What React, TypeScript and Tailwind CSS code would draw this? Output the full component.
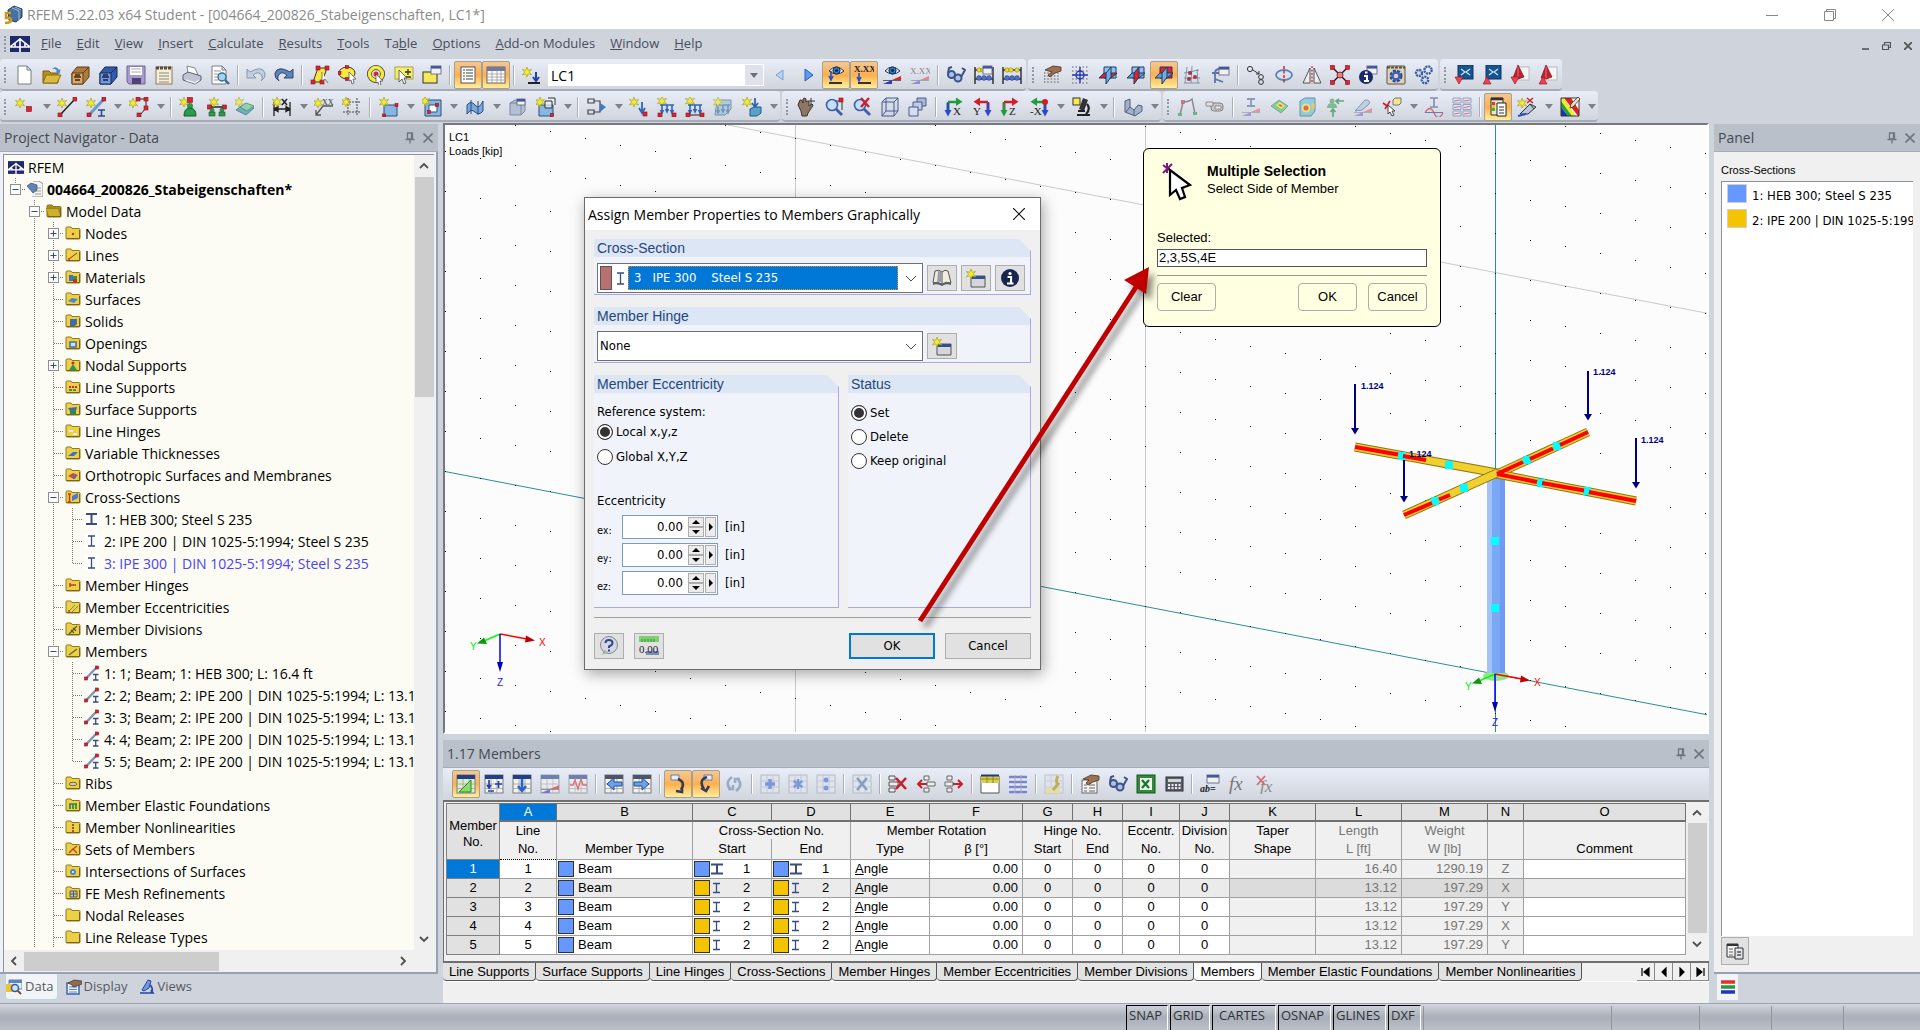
import React, { useState } from 'react';

const Star = ({ x = 5, y = 5 }: { x?: number; y?: number }) => (
    <g transform={`translate(${x} ${y})`}>
        <path d="M0-5L1.3-1.6L4.6-2.6L2.3 0L4.6 3L1.2 1.8L0 5L-1.3 1.8L-4.6 3L-2.4 0L-4.6-2.6L-1.3-1.6Z" fill="#f4ec2e" stroke="#a8a42a" strokeWidth=".7" />
    </g>
);

const Node = ({ x, y, s = 4 }: { x: number; y: number; s?: number }) => (
    <rect x={x - s / 2} y={y - s / 2} width={s} height={s} fill="#dc2430" stroke="#8d1220" strokeWidth=".6" />
);

const Grid = ({ x = 1, y = 1, w = 18, h = 18, head = '#203f86', fill = '#f2f2ea' }: { x?: number; y?: number; w?: number; h?: number; head?: string; fill?: string }) => (
    <g>
        <rect x={x} y={y} width={w} height={h} fill={fill} stroke="#777d88" />
        <path d={`M${x} ${y + h / 2}h${w}M${x} ${y + h * 0.75}h${w}M${x + w / 3} ${y}v${h}M${x + (w * 2) / 3} ${y}v${h}`} stroke="#9ca0a8" strokeWidth=".8" />
        <rect x={x} y={y} width={w} height="4" fill={head} />
    </g>
);

const Win = ({ x, y, w = 9, h = 8 }: { x: number; y: number; w?: number; h?: number }) => (
    <g>
        <rect x={x} y={y} width={w} height={h} fill="#f1f1f4" stroke="#666b80" strokeWidth=".9" />
        <rect x={x} y={y} width={w} height="2.6" fill="#46589c" />
    </g>
);

const Loads = ({ c = '#2f66b8' }: { c?: string }) => (
    <g fill="none" stroke={c} strokeWidth="1.6">
        <path d="M3 8h14M5 8v7M10 8v6M15 8v7M3.5 13L5 16L6.5 13M8.5 12L10 15L11.5 12M13.5 13L15 16L16.5 13" />
    </g>
);

const Planes = ({ hot }: { hot: number }) => (
    <g strokeWidth="1" stroke="#1d3b63">
        <path d="M6 2h12v11H6z" fill={hot === 2 ? '#e0202c' : '#8ec3ee'} />
        <path d="M1 13l5-5h13l-6 5z" fill={hot === 0 ? '#e0202c' : '#5f9fd8'} />
        <path d="M8 8l5-6v10l-5 7z" fill={hot === 1 ? '#e0202c' : '#6fb0e4'} />
    </g>
);

const Eye = ({ y = 7 }: { y?: number }) => (
    <g>
        <path d={`M3 ${y}q7-8 15 0q-7 6-15 0z`} fill="#e8f2fb" stroke="#24364f" />
        <circle cx="10.5" cy={y - 0.5} r="3.6" fill="#2f78c4" stroke="#12325c" />
        <circle cx="10.5" cy={y - 0.5} r="1.3" fill="#0a1428" />
    </g>
);

const Wedge = ({ faded }: { faded?: boolean }) => (
    <g opacity={faded ? 0.45 : 1}>
        <path d="M1 19L10 15V19Z" fill="#2c39c9" />
        <path d="M10 15L19 11V15Z" fill="#d9242c" />
        <path d="M1 15.5H19" stroke="#444" strokeWidth=".8" />
    </g>
);

const Axes = ({ a, b, flip, label, dot }: { a: string; b: string; flip?: boolean; label: string; dot?: boolean }) => (
    <g>
        <g transform={flip ? 'translate(20 0) scale(-1 1)' : ''}>
            <path d="M4 5H13M4 5V14" stroke={a} strokeWidth="2.6" />
            <path d="M4 6V14" stroke={b} strokeWidth="2.6" />
            <path d="M12 .5L18.5 4.7L12 9Z" fill={a} />
            <path d="M.5 13H7.5L4 19.5Z" fill={b} />
            {dot && <circle cx="4" cy="5" r="3" fill="#cf1f2a" />}
        </g>
        <text x={flip ? 1 : 9} y="18" fontSize="11" fontFamily="Liberation Serif, serif" fill="#222">{label}</text>
    </g>
);

const Cad = ({ up, red }: { up?: boolean; red?: boolean }) => (
    <g>
        {red ? (
            <g>
                <rect x="9" y="2" width="10" height="13" fill="#f5f5f5" stroke="#b9b9bd" />
                <path d="M8 0L14 12L8 14L3 13Z" fill="#c01f2c" stroke="#7b1019" strokeWidth=".7" />
                <path d="M8 2V13" stroke="#e6727a" />
            </g>
        ) : (
            <g>
                <rect x="4" y="0" width="15" height="14" fill="#17548f" stroke="#0d3766" />
                <path d="M7 4l4 3-4 3M16 4l-4 3 4 3" fill="none" stroke="#c9e2f7" strokeWidth="1.3" />
            </g>
        )}
        <path d={up ? 'M1 19L5 12L9 19Z' : 'M1 12H9L5 19Z'} fill="#ea4450" stroke="#a41a24" strokeWidth=".7" />
    </g>
);

const CellGrid = ({ children }: { children?: React.ReactNode }) => (
    <g>
        <rect x="1" y="1" width="18" height="18" fill="#dfe3eb" stroke="#b4bac6" />
        <path d="M1 7h18M1 13h18M7 1v18M13 1v18" stroke="#c2c8d3" />
        {children}
    </g>
);

const Glasses = () => (
    <g fill="#a9c3e6" stroke="#3f5288" strokeWidth="2">
        <circle cx="5.500" cy="9.500" r="3.500" />
        <circle cx="12" cy="13" r="3.500" />
        <path d="M2 8L3 3l3-1M15 12l4-7-3-2" fill="none" />
    </g>
);

const Abacus = ({ win }: { win?: boolean }) => (
    <g>
        <path d="M1 2V19M19 2V19M1 5H19M1 14H19" stroke="#333" strokeWidth="1.5" />
        <g fill="#f0d92a" stroke="#7d7113" strokeWidth=".5"><circle cx="5" cy="5" r="2.2" /><circle cx="9" cy="5" r="2.2" /><circle cx="15" cy="5" r="2.2" /></g>
        <g fill="#4c6fd0" stroke="#22387d" strokeWidth=".5"><circle cx="5" cy="13" r="2.4" /><circle cx="10" cy="13" r="2.4" /><circle cx="15" cy="13" r="2.4" /></g>
        {win && <Win x={9} y={1} />}
    </g>
);

const Supports = () => (
    <g fill="#2b9a4a" stroke="#155c2a" strokeWidth=".6"><circle cx="5" cy="13" r="2" /><rect x="2" y="15" width="6" height="4" /><circle cx="15" cy="13" r="2" /><rect x="12" y="15" width="6" height="4" /></g>
);

const icons: Record<string, React.ReactNode> = {
    // file toolbar
    new: <path d="M4 1h9l4 4v14H4zM13 1v4h4" fill="#fff" stroke="#777c85" />,
    open: <g><path d="M1 6h6l2 2h7v10H1z" fill="#b78f1e" stroke="#7a5e10" /><path d="M4 10h15l-4 8H1z" fill="#d9bb40" stroke="#8a6c12" /><path d="M10 4q4-4 7 1l1.5-1-1 5-4-2 1.5-1q-2-3-5-2" fill="#4a86c9" /></g>,
    box: <g><path d="M2 8l5-6h12v10l-6 7H2z" fill="#b07a3a" stroke="#5a3c18" /><path d="M2 8h11v11H2zM13 8l6-6" fill="#d8a666" stroke="#5a3c18" /><path d="M4 12h7M5 10h5M5 15h5" stroke="#3d2811" strokeWidth="1.4" /></g>,
    boxBlue: <g><path d="M2 8l5-6h12v10l-6 7H2z" fill="#345ba8" stroke="#16295c" /><path d="M2 8h11v11H2zM13 8l6-6" fill="#7398de" stroke="#16295c" /><path d="M4 12h7M5 10h5M5 15h5" stroke="#13234e" strokeWidth="1.4" /></g>,
    save: <g><path d="M1 1h18v18H3l-2-2z" fill="#a79cc9" stroke="#6f6596" /><rect x="4" y="2" width="12" height="8" fill="#fff" /><path d="M5 4h10M5 7h10" stroke="#aaa" /><rect x="6" y="13" width="9" height="6" fill="#4d4378" /></g>,
    report: <g><rect x="2" y="2" width="16" height="17" fill="#f5eedb" stroke="#8a7a5c" /><path d="M2 3h16" stroke="#5b4a38" strokeWidth="3" strokeDasharray="3 1" /><path d="M5 8h10M5 11h10M5 14h10M5 17h10" stroke="#8d8878" /></g>,
    print: <g><path d="M5 1l8 2 3 7-10-1z" fill="#fff" stroke="#888" /><path d="M1 10l5-3 13 4v4l-6 4-12-4z" fill="#bfc3d2" stroke="#5c607a" /><path d="M4 15l9 3 4-3" stroke="#f0f0f0" strokeWidth="1.5" fill="none" /></g>,
    preview: <g><path d="M2 1h10l4 4v14H2zM12 1v4h4" fill="#fff" stroke="#777c85" /><path d="M4 6h7M4 9h6M4 12h4M4 15h4" stroke="#999" /><circle cx="12" cy="12" r="4" fill="#a7d2ee" stroke="#386b9c" strokeWidth="1.4" /><path d="M15 15l4 4" stroke="#386b9c" strokeWidth="2.4" /></g>,
    undo: <path d="M1 4v9h9L7 10q6-5 9 1q1 3-1 5 5-3 4-8Q16 0 4 7z" fill="#c3cddb" stroke="#8797b0" />,
    redo: <path d="M19 4v9h-9l3-3q-6-5-9 1q-1 3 1 5-5-3-4-8Q4 0 16 7z" fill="#5f83b5" stroke="#2c4670" />,
    selPoly: <g><path d="M8 3H17L12 17H3Z" fill="#f6e93c" stroke="#333" /><Node x={8} y={3} /><Node x={17} y={3} /><Node x={3} y={17} /><Node x={12} y={17} /><path d="M12 7v9l3-2 3 4" fill="#fff" stroke="#555" strokeWidth=".8" /></g>,
    selEllipse: <g><ellipse cx="9" cy="8" rx="8" ry="6" fill="#f6e93c" stroke="#333" /><Node x={9} y={2} s={3} /><Node x={1.5} y={8} s={3} /><Node x={9} y={14} s={3} /><path d="M11 7l7 7-3 0 1 4-2 1-1-4-2 1z" fill="#fff" stroke="#555" strokeWidth=".8" /></g>,
    selRing: <g><circle cx="10" cy="9" r="6.5" fill="none" stroke="#333" strokeWidth="5" /><circle cx="10" cy="9" r="6.5" fill="none" stroke="#f6e93c" strokeWidth="3.5" /><circle cx="10" cy="9" r="2.5" fill="#d9242c" /><path d="M10 9l7 7-3 0 1 4-2 1-1-4-2 1z" fill="#fff" stroke="#555" strokeWidth=".8" /></g>,
    selPlus: <g><rect x="1" y="2" width="18" height="12" fill="#f5ef6a" stroke="#aaa250" /><path d="M14 4v6M11 7h6M11 12h6" stroke="#333" strokeWidth="1.3" /><path d="M5 5v12l3-3 2 5 2-1-2-5h3z" fill="#fff" stroke="#444" strokeWidth=".8" /></g>,
    selWin: <g><rect x="1" y="7" width="14" height="11" fill="#f5e95a" stroke="#333" /><Win x={9} y={1} w={10} /></g>,
    table1: <g><rect x="3" y="2" width="14" height="16" fill="#fff" stroke="#555" /><path d="M5 5h2M8 5h7M5 8h2M8 8h7M5 11h2M8 11h7M5 14h2M8 14h7" stroke="#444" strokeWidth="1.2" /></g>,
    table2: <g><rect x="1" y="2" width="18" height="16" fill="#fff" stroke="#666" /><rect x="1" y="2" width="18" height="4" fill="#6d7aa8" /><path d="M1 9h18M1 12h18M1 15h18M6 6v12M11 6v12M15 6v12" stroke="#999" strokeWidth=".8" /></g>,
    loadNew: <g><Star x={5} y={7} /><path d="M14 7v8M11 12l3 4 3-4" stroke="#1d3fb3" strokeWidth="2" fill="none" /><path d="M6 18h12" stroke="#222" strokeWidth="2" /></g>,
    prev: <path d="M13 5v10L6 10z" fill="#b9d0f2" stroke="#7d9fd4" />,
    next: <path d="M7 4v12l8-6z" fill="#5e9bf0" stroke="#2b5db8" />,
    showLoad: <g><Eye y={6} /><path d="M5 6v8M3 11l2 4 2-4" stroke="#2751c6" strokeWidth="1.6" fill="none" /><path d="M3 18h13" stroke="#333" strokeWidth="2" /></g>,
    showVal: <g><text x="0" y="7" fontSize="9" fontFamily="Liberation Serif, serif" fontWeight="bold" fill="#222">X.XX</text><path d="M5 8v7M3 12l2 4 2-4" stroke="#2751c6" strokeWidth="1.6" fill="none" /><path d="M4 18h13" stroke="#333" strokeWidth="2" /></g>,
    eyeRes: <g><Eye y={6} /><Wedge /></g>,
    valRes: <g><text x="0" y="9" fontSize="9" fontFamily="Liberation Serif, serif" fill="#888">X.XX</text><Wedge faded /></g>,
    glasses: <Glasses />,
    abacusWin: <Abacus win />,
    abacus: <Abacus />,
    gridHand: <g><path d="M2 11h16M2 14h16M2 17h16M2 8h16" stroke="#555" strokeDasharray="1.5 1.8" /><path d="M3 5l8-4 8 1v4l-6 2-5 4-2-2 4-3z" fill="#9c7050" stroke="#4a3222" strokeWidth=".8" /></g>,
    gridSnap: <g><path d="M2 2h16M2 6h16M2 14h16M2 18h16" stroke="#666" strokeDasharray="1.5 2" /><circle cx="10" cy="10" r="4" fill="none" stroke="#2537b4" strokeWidth="1.4" /><path d="M10 2v16M2 10h16" stroke="#2537b4" strokeWidth="1.4" /></g>,
    plane1: <Planes hot={0} />,
    plane2: <Planes hot={1} />,
    plane3: <Planes hot={2} />,
    gridLines: <g stroke="#6c93a6" strokeWidth=".9"><path d="M5 2L3 18M10 1L9 18M15 4L16 18M2 8l15-3M2 13h16M2 18h16" /><Node x={7} y={14} s={2.5} /><Node x={13} y={12} s={2.5} /><Node x={8} y={8} s={2.5} /></g>,
    coord: <g><path d="M5 18V8q0-4 5-4M2 8h8M5 14l8 3" fill="none" stroke="#5d74a8" strokeWidth="1.8" /><Win x={9} y={2} w={10} /></g>,
    moveCopy: <g fill="none" stroke="#333"><circle cx="4" cy="4" r="2.6" /><circle cx="15" cy="12" r="2.4" /><circle cx="15" cy="17" r="2.4" /><path d="M7 5l6 4M13 6v3h-3" /></g>,
    rotate: <g><ellipse cx="10" cy="10" rx="8" ry="5" fill="none" stroke="#5b84b8" strokeWidth="1.8" /><path d="M10 1v18" stroke="#cf1f2a" strokeDasharray="3 1.5" strokeWidth="1.4" /></g>,
    mirror: <g><path d="M8 3v15H1zM12 3v15h7z" fill="#eceef2" stroke="#555" /><path d="M10 1v18" stroke="#cf1f2a" strokeDasharray="2 1.5" strokeWidth="1.2" /></g>,
    explode: <g><path d="M2 2L18 18M18 2L2 18" stroke="#222" strokeWidth="1.5" /><Node x={2.5} y={2.5} /><Node x={17.5} y={2.5} /><Node x={2.5} y={17.5} /><Node x={17.5} y={17.5} /><circle cx="10" cy="10" r="3" fill="#e6808a" stroke="#92202c" /></g>,
    infoWin: <g><Win x={9} y={1} w={10} /><circle cx="8" cy="12" r="7" fill="#1b2a6b" /><path d="M6 11h3v5M6 16h5M7 7.500h2.500" stroke="#fff" strokeWidth="2" /></g>,
    gearWin: <g><rect x="1" y="1" width="18" height="18" rx="1" fill="#ded3bd" stroke="#5a5140" /><path d="M1 2.500h18" stroke="#5a5140" strokeWidth="2" strokeDasharray="3 1" /><circle cx="10" cy="11" r="4.500" fill="none" stroke="#2b4a92" strokeWidth="4" strokeDasharray="2.600 1" /><circle cx="10" cy="11" r="3.500" fill="none" stroke="#3e63b5" strokeWidth="2.500" /></g>,
    gears: <g fill="none" stroke="#3c5ba6" strokeWidth="2.400"><circle cx="5" cy="8" r="3" strokeDasharray="2 .8" /><circle cx="14" cy="5" r="3.600" strokeDasharray="2 .8" /><circle cx="11" cy="15" r="3.200" strokeDasharray="2 .8" /></g>,
    cadDown: <Cad />,
    cadUp: <Cad up />,
    cadRed: <Cad red />,
    cadRedUp: <Cad red up />,
    // model toolbar
    nNode: <g><Star x={5} y={6} /><Node x={14} y={12} s={5} /></g>,
    nLine: <g><path d="M3 18L18 2" stroke="#222" strokeWidth="1.5" /><Star x={5} y={6} /><Node x={18} y={2} s={4} /><Node x={3} y={18} s={4} /></g>,
    nMember: <g><path d="M3 18L18 2" stroke="#6a9ad0" strokeWidth="3" /><Star x={5} y={6} /><Node x={18} y={2} /><Node x={3} y={18} /><path d="M12 13h7M12 19h7M15.500 13v6" stroke="#324b87" strokeWidth="1.600" /></g>,
    nPoly: <g><path d="M8 2h9v9l-6 7" fill="none" stroke="#222" /><Star x={4} y={6} /><Node x={9} y={2} /><Node x={17} y={2} /><Node x={17} y={11} /><Node x={10} y={18} /></g>,
    nSupport: <g><Star x={5} y={5} /><Node x={11} y={3} s={5} /><circle cx="11" cy="9" r="3" fill="#2b9a4a" /><path d="M5 19q0-8 6-8t6 8z" fill="#2b9a4a" stroke="#155c2a" /></g>,
    nLineSup: <g><path d="M2 10h16" stroke="#222" strokeWidth="1.500" /><Star x={7} y={5} /><Node x={2.500} y={10} /><Node x={17.500} y={10} /><Supports /></g>,
    nSurfSup: <g opacity=".75"><path d="M1 13l8-6 10 4-8 7z" fill="#4b9fb0" stroke="#2a6d7c" /><path d="M5 10l6-4 8 3-7 5z" fill="#7bc9a0" stroke="#2e8458" /><Star x={4} y={5} /></g>,
    nDim: <g><path d="M2 5v14M18 5v14M2 12h16M2 12l4-2.500v5zM18 12l-4-2.500v5z" fill="#222" stroke="#222" strokeWidth="1.300" /><Star x={5} y={5} /><path d="M10 2l5 6M15 2l-5 6" stroke="#222" strokeWidth="1.500" /></g>,
    nText: <g><path d="M19 9H9L2 18M2 13v5h5" fill="none" stroke="#555" strokeWidth="1.300" /><Star x={4} y={6} /><text x="8" y="8" fontSize="8" fontFamily="Liberation Serif, serif" fill="#333">XX</text></g>,
    nGuides: <g><path d="M6 1v18M15 1v18M1 5h18M1 15h18" stroke="#444" strokeDasharray="2 1" /><Star x={4} y={5} /></g>,
    nSurface: <g><path d="M5 8h13v11H5z" fill="#88b5e2" stroke="#28527f" /><Star x={5} y={5} /><Node x={17.500} y={8} s={3} /><Node x={5} y={18.500} s={3} /></g>,
    nOpening: <g><path d="M3 3h16v16H3z" fill="#88b5e2" stroke="#28527f" /><path d="M7 8h8v7H7z" fill="#fff" stroke="#28527f" /><Star x={3} y={4} /><Node x={7} y={15} s={3} /><Node x={15} y={8} s={3} /></g>,
    nCurved: <g><path d="M2 8q4-5 8 0t8-4v10q-4 5-8 1t-8 2z" fill="#7ba9dc" stroke="#2d4f80" /><path d="M6 3v14M13 4v14" stroke="#2d4f80" /></g>,
    nSolid: <g><path d="M3 6l5-3h10v11l-4 4H3z" fill="#b4bfd2" stroke="#7c89a3" /><path d="M3 6h11v12M14 6l4-3" fill="none" stroke="#7c89a3" /><Win x={10} y={2} w={8} h={6} /></g>,
    nExtrude: <g><path d="M3 8h14v11H3z" fill="#88b5e2" stroke="#28527f" /><Star x={4} y={5} /><path d="M9 4h7v7H9zM12 1h7v7" fill="#eef" fillOpacity=".7" stroke="#333" /><Node x={16} y={18} s={3} /></g>,
    nRelease: <g><path d="M1 2h6v4H1zM1 13h6v4H1zM7 4h6v11H7" fill="none" stroke="#444" strokeWidth="1.200" /><path d="M13 6l6 4-6 5z" fill="#3c78c8" /></g>,
    nLoadNode: <g><Star x={5} y={5} /><path d="M13 5v9M10 11l3 5 3-5" fill="none" stroke="#2f66b8" strokeWidth="1.800" /><Node x={16} y={17} /></g>,
    nLoad1: <g><Star x={5} y={4} /><Loads /><Node x={3} y={18} /><Node x={17} y={18} /></g>,
    nLoad2: <g><Star x={5} y={4} /><Loads /><path d="M3 18h14" stroke="#222" /><Node x={3} y={18} /><Node x={17} y={18} /></g>,
    nLoad3: <g opacity=".7"><path d="M4 3h14v9l-6 6H2z" fill="#9bc3d8" stroke="#4a7892" /><Loads c="#4a78a8" /><Star x={5} y={5} /></g>,
    nLoad4: <g><Star x={5} y={5} /><path d="M13 1v8M10 6l3 4 3-4" fill="none" stroke="#2f66b8" strokeWidth="1.800" /><path d="M8 12l4-2h7v6l-4 3H8z" fill="#5aa0cc" stroke="#235a80" /></g>,
    hand: <g><path d="M4 3q2-1 3 3V2q2-2 3 0v3q2-2 3 0v4l3-2q2 1 0 3l-4 6-1 3H6L5 14 2 8z" fill="#8d7663" stroke="#3d3027" /><path d="M15 1v7M12 4h7" stroke="#333" /></g>,
    zoomWin: <g><path d="M8 4h10v9" fill="none" stroke="#333" /><circle cx="8" cy="8" r="5.500" fill="#c3defa" stroke="#3d61a8" strokeWidth="1.600" /><path d="M12 12l6 6" stroke="#3d61a8" strokeWidth="2.800" /><Node x={17} y={3} s={4} /></g>,
    zoomX: <g><circle cx="8" cy="8" r="5.500" fill="#c3defa" stroke="#3d61a8" strokeWidth="1.600" /><path d="M12 12l6 6" stroke="#3d61a8" strokeWidth="2.800" /><path d="M9 1l8 9M17 1l-8 9" stroke="#cf1f2a" strokeWidth="2.400" /></g>,
    cube: <path d="M2 5h12v14H2zM6 1h12v13H6zM2 5l4-4M14 5l4-4M14 19l4-5M2 19l4-5" fill="#c7d3ea" fillOpacity=".4" stroke="#4a5a86" />,
    cubes: <g fill="#a9b9d9" stroke="#4a5a86"><path d="M9 1h9v8H9z" /><path d="M5 5h9v8H5z" fill="#c0cce6" /><path d="M1 10h9v9H1z" fill="#d5def0" /></g>,
    axX: <Axes a="#1f9a3e" b="#2b49c4" label="X" />,
    axY: <Axes a="#cf1f2a" b="#2b49c4" flip label="Y" />,
    axZ: <Axes a="#cf1f2a" b="#1f9a3e" label="Z" />,
    axNX: <Axes a="#1f9a3e" b="#2b49c4" flip dot label="-X" />,
    crane: <g><path d="M11 1l5 2-4 11-5-2z" fill="#333" /><path d="M15 7q4 5-1 10M5 18h13M6 14h7" stroke="#222" strokeWidth="2.200" fill="none" /><rect x="1" y="1" width="7" height="7" fill="#f7ec4d" stroke="#333" /></g>,
    render: <g><path d="M2 4l5-2v8l4 3 4-5 4 1v5l-7 5-10-4z" fill="#9fb2c9" stroke="#4e617c" /><path d="M7 10l-4 5M11 13v5" stroke="#4e617c" /></g>,
    deform: <g opacity=".6"><path d="M3 18L6 5q6 0 9-3l3 15" fill="none" stroke="#555" strokeWidth="1.500" /><g fill="#2a9a4a"><rect x="1" y="16" width="4" height="3" /><rect x="16" y="15" width="4" height="3" /></g><Node x={6} y={5} s={3} /></g>,
    tool: <g><rect x="6" y="6" width="12" height="8" rx="3" fill="#c9c9cc" stroke="#7e7e84" /><path d="M1 5h7v4H1z" fill="#e3e3e6" stroke="#8a8a90" /><path d="M10 9h6v3h-6z" fill="#eee" stroke="#8a8a90" /></g>,
    secRes: <g opacity=".8"><path d="M6 2h8M6 9h8M10 2v7" stroke="#7a88b0" strokeWidth="1.800" /><Wedge faded /></g>,
    surfRes: <g opacity=".75"><path d="M2 9l8-6 9 6-7 7z" fill="#58d06a" stroke="#558" strokeWidth=".6" /><path d="M7 8l4-3 5 4-4 3z" fill="#f5e84a" /><path d="M9 8l2-1 3 2-2 1z" fill="#e64430" /></g>,
    solidRes: <g opacity=".8"><path d="M3 4l5-3h10v13l-4 5H3z" fill="#7fc6e0" stroke="#47809a" /><circle cx="9" cy="11" r="4.500" fill="#f0e24a" /><circle cx="9" cy="11" r="2.500" fill="#e04a38" /><ellipse cx="16" cy="9" rx="1.500" ry="3.500" fill="#f0c24a" /></g>,
    supRes: <g opacity=".7"><circle cx="7" cy="4" r="2.500" fill="#5aa86c" /><path d="M2 11q0-5 5-5t5 5z" fill="#5aa86c" /><path d="M12 4h7M14 2l-3 2 3 3M8 20v-7M5.500 15L8 12l2.500 3" stroke="#2f8f48" strokeWidth="1.600" fill="none" /></g>,
    cutRes: <g opacity=".8"><path d="M2 14L12 3q6 0 4 4l-7 6z" fill="#bccbe2" stroke="#6f83a6" /><Wedge faded /></g>,
    pick: <g><path d="M1 6l7 5M8 4l-5 8" stroke="#cf1f2a" strokeWidth="1.600" /><path d="M11 3l2-2h6v5l-2 2h-6z" fill="#f3e58a" stroke="#777" /><path d="M6 8v9l2-2 2 4 2-1-2-4h3z" fill="#fff" stroke="#444" /></g>,
    secWave: <g opacity=".8"><path d="M6 1h8M6 10h8M10 1v9" stroke="#6a79a6" strokeWidth="1.600" /><path d="M1 16q5-9 9 0t9 0" fill="none" stroke="#d9455a" strokeWidth="1.300" /><path d="M1 15.500h18" stroke="#4a63c0" /></g>,
    multi: <g opacity=".85"><path d="M1 1h8v5H1zM11 1h8v5h-8zM1 7.500h8v5H1zM11 7.500h8v5h-8zM1 14h8v5H1zM11 14h8v5h-8z" fill="#dfe5f4" stroke="#8a97c0" /><path d="M2 4l6-1M12 4l6-1M2 10.500l6-1M12 10.500l6-1M2 17l6-1M12 17l6-1" stroke="#d0606e" /></g>,
    panel: <g><path d="M3 1h12v17H3z" fill="#efe6c8" stroke="#333" /><path d="M3 2h12" stroke="#333" strokeWidth="2.500" /><path d="M4 5h3v3H4z" fill="#e33" /><path d="M4 8h3v3H4z" fill="#dc2" /><path d="M4 11h3v3H4z" fill="#3b3" /><path d="M9 6h9v13H9z" fill="#fff" stroke="#222" /><path d="M11 10h5M11 13h5M11 16h5" stroke="#333" /></g>,
    clip: <g><path d="M3 17L13 7l6 3-8 7z" fill="#b7c6dc" stroke="#333" /><path d="M13 7l4 5" stroke="#333" /><Star x={5} y={6} /><path d="M10 1l6 5M16 1l-6 5" stroke="#cf1f2a" strokeWidth="1.500" /><path d="M1 19l8-2" stroke="#2751c6" strokeWidth="2" /></g>,
    colors: <g><path d="M1 1h18v18H1z" fill="#fff" /><path d="M4 1h7l8 12v6h-1z" fill="#e21f22" /><path d="M1 1h3l12 18h-4L1 4z" fill="#f5e92d" /><path d="M1 4l11 15H8L1 10z" fill="#27a336" /><path d="M1 10l7 9H1z" fill="#1f2fbf" /><path d="M1 1h18v18H1z" stroke="#333" /><path d="M10 11l1-4 7-7 2 2-7 8z" fill="#e9ddc2" stroke="#333" strokeWidth=".8" /></g>,
    // table toolbar
    tEdit: <g><Grid fill="#d8efc9" /><path d="M3 18L15 6v12z" fill="#8bdc6a" stroke="#2c8330" /></g>,
    tAdd: <g><Grid /><path d="M5 6v8M3 11l2 3 2-3M11 10h7M14.500 7v7M4 17h6" stroke="#2744a5" strokeWidth="1.700" fill="none" /></g>,
    tDown: <g><Grid /><path d="M10 5v10M6 12l4 5 4-5" stroke="#2d62c9" strokeWidth="2.600" fill="none" /></g>,
    tRes: <g opacity=".6"><Grid /><Wedge /></g>,
    tWave: <g opacity=".6"><Grid /><path d="M2 11h3l2-5 3 9 3-10 2 6h4" fill="none" stroke="#d9242c" strokeWidth="1.300" /></g>,
    tPrev: <g><Grid head="#4c5568" /><path d="M18 8h-8V4l-7 6 7 6v-4h8z" fill="#6da1e8" stroke="#1f4f9c" /></g>,
    tNext: <g><Grid head="#4c5568" /><path d="M2 8h8V4l7 6-7 6v-4H2z" fill="#6da1e8" stroke="#1f4f9c" /></g>,
    tGo1: <g><path d="M3 1h8v5H3z" fill="#e9edf8" stroke="#6d7aa8" /><path d="M10 5q8 3 3 11M8 17l6 1v-5" fill="none" stroke="#333c58" strokeWidth="2.600" /></g>,
    tGo2: <g><path d="M8 1h8v5H8z" fill="#e9edf8" stroke="#6d7aa8" /><path d="M11 3Q2 6 8 15M5 14l5 3 3-5" fill="none" stroke="#333c58" strokeWidth="2.600" /></g>,
    tSync: <g opacity=".6" fill="none" stroke="#7183ad" strokeWidth="2.600"><path d="M8 3q-8 6-1 13M12 17q8-6 1-13M4 15h5v-4M16 5h-5v4" /></g>,
    tCell1: <CellGrid><path d="M10 5v10M5 10h10" stroke="#7d98dc" strokeWidth="3.500" /></CellGrid>,
    tCell2: <CellGrid><path d="M10 5v10M5.500 7l9 6M14.500 7l-9 6" stroke="#7d98dc" strokeWidth="2.500" /></CellGrid>,
    tCell3: <CellGrid><circle cx="10" cy="6" r="2.500" fill="#7d98dc" /><circle cx="10" cy="14" r="2.500" fill="#7d98dc" /></CellGrid>,
    tCell4: <CellGrid><path d="M5 4l10 12M15 4L5 16" stroke="#8597c4" strokeWidth="2.200" /></CellGrid>,
    tDel: <g><path d="M1 2h6v4H1zM1 8h9v4H1zM1 14h6v4H1z" fill="#eee" stroke="#555" /><path d="M8 4l10 11M18 4L8 15" stroke="#c4202c" strokeWidth="2.600" /></g>,
    tIns: <g><path d="M8 2h5v4H8zM11 8h8v4h-8zM8 14h5v4H8z" fill="#eee" stroke="#666" /><path d="M11 10H2M6 6l-4 4 4 4" stroke="#c4202c" strokeWidth="2" fill="none" /></g>,
    tOut: <g><path d="M3 2h5v4H3zM1 8h8v4H1zM3 14h5v4H3z" fill="#eee" stroke="#666" /><path d="M9 10h9M14 6l4 4-4 4" stroke="#c4202c" strokeWidth="2" fill="none" /></g>,
    tCol: <g><path d="M1 2h18v17H1z" fill="#fff" stroke="#555" /><path d="M1 2h18v7H1z" fill="#d9cf49" /><path d="M7 2v7M13 2v7M1 5h18" stroke="#8d8630" /><path d="M1 1.500h18" stroke="#26396f" strokeWidth="2" /></g>,
    tRows: <g><path d="M1 1h18v18H1z" fill="#e6e9f5" /><path d="M1 3h18M1 8h18M1 13h18M1 18h18" stroke="#7784cf" strokeWidth="2.400" /><path d="M7 1v18M13 1v18" stroke="#aab" /></g>,
    tYellow: <g opacity=".75"><CellGrid /><path d="M2 14h14v5H2z" fill="#e9e08a" /><path d="M14 2q-3 6 0 8l-5 6" fill="none" stroke="#b3a02a" strokeWidth="3" /></g>,
    tProps: <g><rect x="2" y="6" width="15" height="13" fill="#f2f2f2" stroke="#666" /><path d="M4 11h3M9 11h6M4 14h3M9 14h6M4 17h3M9 17h6" stroke="#666" /><path d="M3 5l8-4 8 1v4l-6 2-5 3-2-2 3-3z" fill="#9c7050" stroke="#4a3222" strokeWidth=".8" /></g>,
    excel: <g><rect x="1" y="1" width="18" height="18" fill="#2f8a3a" stroke="#17571f" /><rect x="4" y="4" width="12" height="12" fill="#eef7ec" /><path d="M6 6l7 8M13 6l-7 8" stroke="#1d7a2b" strokeWidth="2.400" /></g>,
    calc: <g><rect x="2" y="3" width="17" height="14" fill="#5b5f6d" stroke="#2c2f3a" /><rect x="4" y="5" width="13" height="3" fill="#cfd8cf" /><path d="M4 11h13M4 14h13" stroke="#eee" strokeWidth="1.800" strokeDasharray="2 1.500" /></g>,
    tAb: <g><Win x={7} y={1} w={12} h={8} /><text x="0" y="18" fontSize="10" fontStyle="italic" fontWeight="bold" fontFamily="Liberation Serif, serif" fill="#222">ab=</text></g>,
    fx: <text x="1" y="16" fontSize="19" fontStyle="italic" fontFamily="Liberation Serif, serif" fill="#777">fx</text>,
    fxDel: <g><text x="4" y="18" fontSize="17" fontStyle="italic" fontFamily="Liberation Serif, serif" fill="#888">fx</text><path d="M1 2l8 9M9 2l-8 9" stroke="#d66a72" strokeWidth="1.800" /></g>,
};

const Icon = ({ name }: { name: string }) => (
    <svg viewBox="0 0 20 20" className="h-5 w-5 shrink-0" fill="none">{icons[name]}</svg>
);

// "|" is a separator, a trailing ">" adds a drop-down arrow, a trailing "*" marks a pressed button
const ToolItems = ({ items }: { items: string }) => (
    <>
        {items.split(' ').map((item, i) => {
            if (item === '|') {
                return <span key={i} className="mx-[3px] h-5 w-[2px] shrink-0 border-r border-white bg-[#a9aeb9]" />;
            }
            const name = item.replace(/[>*]/, '');
            if (item.endsWith('>')) {
                return (
                    <button key={i} type="button" aria-label={name} className="flex h-7 w-[43px] shrink-0 items-center pl-[5px]">
                        <Icon name={name} />
                        <svg viewBox="0 0 8 5" className="ml-2 h-[5px] w-2"><path d="M0 0h8L4 5z" fill="#7d818a" /></svg>
                    </button>
                );
            }
            return (
                <button
                    key={i}
                    type="button"
                    aria-label={name}
                    className={item.endsWith('*')
                        ? 'flex h-7 w-7 shrink-0 items-center justify-center rounded-xs border border-[#a9a08a] bg-linear-to-b from-[#f3c795] via-[#fdb04c] to-[#ffee9c]'
                        : 'flex h-7 w-7 shrink-0 items-center justify-center'}
                >
                    <Icon name={name} />
                </button>
            );
        })}
    </>
);

const ToolGroup = ({ items, children }: { items: string; children?: React.ReactNode }) => (
    <div className="mr-[2px] flex h-full shrink-0 items-center rounded-sm border-b-2 border-[#a7abb7] bg-linear-to-b from-[#e9edf7] to-[#d1d5de] pt-[2px]">
        <span className="ml-1 mr-1 h-4 w-[2px] shrink-0 border-l-2 border-dotted border-[#9398a4]" />
        <ToolItems items={items} />
        {children}
    </div>
);

const menus: [string, string, string][] = [
    ['', 'F', 'ile'], ['', 'E', 'dit'], ['', 'V', 'iew'], ['', 'I', 'nsert'], ['', 'C', 'alculate'], ['', 'R', 'esults'],
    ['', 'T', 'ools'], ['Ta', 'b', 'le'], ['', 'O', 'ptions'], ['', 'A', 'dd-on Modules'], ['', 'W', 'indow'], ['', 'H', 'elp'],
];

const Logo = ({ className }: { className: string }) => (
    <svg viewBox="0 0 20 16" className={className}>
        <rect width="20" height="16" fill="#1f2a6b" />
        <path d="M0 11h20M0 11L10 3L20 11M10 2v14M5 7v4M15 7v4" stroke="#fff" strokeWidth="1.600" fill="none" />
    </svg>
);

const Pin = () => (
    <svg viewBox="0 0 10 12" className="h-3 w-[10px]"><path d="M2.500 1h5v6h-5zM.500 7.500h9M5 7v4.500M6.500 1v6" fill="none" stroke="#6f747d" strokeWidth="1.300" /></svg>
);

const Cross = () => (
    <svg viewBox="0 0 10 10" className="h-[10px] w-[10px]"><path d="M.500.500l9 9M9.500.500l-9 9" stroke="#6f747d" strokeWidth="1.600" /></svg>
);

const PanelHeader = ({ title }: { title: string }) => (
    <div className="flex h-7 shrink-0 items-center border-b border-[#a4aab6] bg-[#b9c0ca] pl-1 pr-[5px] text-[14px] text-[#454a52]">
        <h2 className="flex-1">{title}</h2>
        <button type="button" aria-label="Pin" className="mr-2"><Pin /></button>
        <button type="button" aria-label="Close"><Cross /></button>
    </div>
);

const folderMarks: Record<string, React.ReactNode> = {
    node: <circle cx="8" cy="8" r="1.200" fill="#d9242c" />,
    line: <g><path d="M4 11L12 5" stroke="#8b3a1a" /><circle cx="4" cy="11" r="1" fill="#d9242c" /></g>,
    material: <g><path d="M4 5h4v6H4z" fill="#3a72c8" /><path d="M8 6h4v3H8z" fill="#2a9a4a" /><path d="M8 9h4v3H8z" fill="#d9242c" /></g>,
    surface: <path d="M3 9l4-3 6 1-4 4z" fill="#4a86d0" />,
    solid: <path d="M5 5h7v5l-2 2H5z" fill="#3f6ea8" />,
    opening: <path d="M5 6h6v5H5z" fill="#cfe0f5" stroke="#3f6ea8" strokeWidth="1.500" />,
    support: <g><circle cx="8" cy="5" r="1.500" fill="#d9242c" /><path d="M4 12l4-6 4 6z" fill="#2a9a4a" /></g>,
    lineSup: <g><path d="M4 7h8" stroke="#d9242c" strokeWidth="2" strokeDasharray="2 1" /><path d="M4 10h8" stroke="#2a9a4a" strokeWidth="2" strokeDasharray="3 1" /></g>,
    surfSup: <g><path d="M3 6l9-1-1 4H5z" fill="#3f6ea8" /><path d="M5 9h6v3H5z" fill="#2a8a4a" /></g>,
    hinge: <path d="M4 7h4M8 10h4" stroke="#eef" strokeWidth="2" />,
    thick: <path d="M3 10l5-4h5l-4 4z" fill="#3a72c8" />,
    ortho: <g><path d="M3 8l5-3 5 2-4 4z" fill="#c64a5a" /><path d="M7 10l5-3-2 4z" fill="#3a72c8" /></g>,
    section: <g><path d="M3 4h3M3 12h3M4.500 4v8" stroke="#c63a2a" strokeWidth="1.500" /><path d="M7 11V6l6-3v5z" fill="#4a78e0" /></g>,
    memHinge: <path d="M5 5v4M5 7h6" stroke="#c63a2a" strokeWidth="1.500" />,
    eccentricity: <g><path d="M4 11L10 5M7 12L13 6" stroke="#8a8a5a" /><circle cx="4" cy="11" r="1" fill="#c63a2a" /></g>,
    division: <g><path d="M4 12L12 4M6 8l3 3M8 6l3 3" stroke="#55553a" strokeWidth="1.200" /></g>,
    member: <path d="M4 11L12 5" stroke="#6b6b3a" strokeWidth="1.500" />,
    rib: <ellipse cx="8" cy="8" rx="4" ry="1.700" fill="#cfcfb0" stroke="#77703a" />,
    elastic: <path d="M4 6h8M5 6v5M8 6v5M11 6v5" stroke="#2a8a4a" strokeWidth="1.700" />,
    nonlin: <path d="M8 4v8" stroke="#a13a2a" strokeWidth="1.700" strokeDasharray="2 1" />,
    sets: <path d="M4 11l4-4 4 4M8 7l4-3" stroke="#c63a2a" strokeWidth="1.300" fill="none" />,
    inter: <g><circle cx="8" cy="8" r="3" fill="#4a86d0" /><circle cx="8" cy="8" r="1" fill="#fff" /></g>,
    mesh: <path d="M5 5h7v6H5zM8.500 5v6M5 8h7" stroke="#4d5a78" fill="#c9c28a" />,
    plain: null,
};

const TreeIcon = ({ name }: { name: string }) => {
    if (name === 'logo') return <Logo className="h-[13px] w-4" />;
    if (name === 'project') {
        return (
            <svg viewBox="0 0 16 16" className="h-4 w-4">
                <path d="M6 0h6l4 3v13H5" fill="#f4f4f4" stroke="#888" /><path d="M8 7h6M8 10h6M8 13h6" stroke="#999" />
                <path d="M0 5l4-3 6 2v5l-4 3z" fill="#5f84b5" stroke="#33507a" strokeWidth=".7" />
            </svg>
        );
    }
    if (name === 'heb' || name === 'ipe') {
        return (
            <svg viewBox="0 0 15 16" className="h-4 w-[15px]">
                <rect width="15" height="16" fill="#fff" />
                <path d={name === 'heb' ? 'M2 3h11M2 13h11' : 'M4 3h7M4 13h7'} stroke="#3a4c80" strokeWidth={name === 'heb' ? 2 : 1.3} />
                <path d="M7.500 3v10" stroke="#3a4c80" strokeWidth={name === 'heb' ? 2 : 1.300} />
            </svg>
        );
    }
    if (name === 'beam') {
        return (
            <svg viewBox="0 0 15 16" className="h-4 w-[15px]">
                <path d="M2 13.500L12 3" stroke="#8295b4" strokeWidth="2.500" /><Node x={13} y={2.500} s={3} /><Node x={2} y={13.500} s={3} />
                <path d="M9 9.500h5.500M9 15h5.500M11.700 9.500V15" stroke="#3a4c80" strokeWidth="1.300" />
            </svg>
        );
    }
    return (
        <svg viewBox="0 0 16 14" className="h-[14px] w-4">
            <path d="M1 2q0-1 1-1h4l1 1.500h7q1 0 1 1V12q0 1-1 1H2q-1 0-1-1z" fill={name === 'open' ? '#a98d1d' : '#ecd048'} stroke="#94791c" />
            {name === 'open' && <path d="M0 4.500h12l3 8H2.500z" fill="#cdb02e" stroke="#8b7014" strokeWidth=".6" />}
            <path d="M1.500 12.500h13V4" fill="none" stroke="#7c6412" />
            {folderMarks[name]}
        </svg>
    );
};

// guide string per row: "|" line, "T"/"L" branch, "+"/"-" boxes, "o" box without a line below
const treeRows: [string, string, string][] = [
    ['', 'logo', 'RFEM'],
    ['o', 'project', '004664_200826_Stabeigenschaften*'],
    [' -', 'open', 'Model Data'],
    [' |+', 'node', 'Nodes'],
    [' |+', 'line', 'Lines'],
    [' |+', 'material', 'Materials'],
    [' |T', 'surface', 'Surfaces'],
    [' |T', 'solid', 'Solids'],
    [' |T', 'opening', 'Openings'],
    [' |+', 'support', 'Nodal Supports'],
    [' |T', 'lineSup', 'Line Supports'],
    [' |T', 'surfSup', 'Surface Supports'],
    [' |T', 'hinge', 'Line Hinges'],
    [' |T', 'thick', 'Variable Thicknesses'],
    [' |T', 'ortho', 'Orthotropic Surfaces and Membranes'],
    [' |-', 'section', 'Cross-Sections'],
    [' ||T', 'heb', '1: HEB 300; Steel S 235'],
    [' ||T', 'ipe', '2: IPE 200 | DIN 1025-5:1994; Steel S 235'],
    [' ||L', 'ipe', '3: IPE 300 | DIN 1025-5:1994; Steel S 235'],
    [' |T', 'memHinge', 'Member Hinges'],
    [' |T', 'eccentricity', 'Member Eccentricities'],
    [' |T', 'division', 'Member Divisions'],
    [' |-', 'member', 'Members'],
    [' ||T', 'beam', '1: 1; Beam; 1: HEB 300; L: 16.4 ft'],
    [' ||T', 'beam', '2: 2; Beam; 2: IPE 200 | DIN 1025-5:1994; L: 13.1.'],
    [' ||T', 'beam', '3: 3; Beam; 2: IPE 200 | DIN 1025-5:1994; L: 13.1.'],
    [' ||T', 'beam', '4: 4; Beam; 2: IPE 200 | DIN 1025-5:1994; L: 13.1.'],
    [' ||L', 'beam', '5: 5; Beam; 2: IPE 200 | DIN 1025-5:1994; L: 13.1.'],
    [' |T', 'rib', 'Ribs'],
    [' |T', 'elastic', 'Member Elastic Foundations'],
    [' |T', 'nonlin', 'Member Nonlinearities'],
    [' |T', 'sets', 'Sets of Members'],
    [' |T', 'inter', 'Intersections of Surfaces'],
    [' |T', 'mesh', 'FE Mesh Refinements'],
    [' |T', 'plain', 'Nodal Releases'],
    [' |T', 'plain', 'Line Release Types'],
];

const Guide = ({ kind }: { kind: string }) => (
    <svg viewBox="0 0 19 22" className="h-[22px] w-[19px] shrink-0">
        {'|T-+'.includes(kind) && <path d="M9.500 0V22" stroke="#777" strokeDasharray="1 1" />}
        {'Lo'.includes(kind) && <path d="M9.500 0V11" stroke="#777" strokeDasharray="1 1" />}
        {'TLo-+'.includes(kind) && <path d="M10 11.500H19" stroke="#777" strokeDasharray="1 1" />}
        {'o-+'.includes(kind) && (
            <g>
                <rect x="4.500" y="6.500" width="10" height="10" fill="#fdfdfd" stroke="#8f8f8f" />
                <path d={kind === '+' ? 'M6.500 11.500h6M9.500 8.500v6' : 'M6.500 11.500h6'} stroke="#2b4a9c" />
            </g>
        )}
    </svg>
);

const Chevron = ({ d, cls, thin }: { d: string; cls: string; thin?: boolean }) => (
    <svg viewBox="0 0 10 10" className={cls}><path d={d} fill="none" stroke="#505050" strokeWidth={thin ? 1 : 1.8} /></svg>
);

const Navigator = () => (
    <aside className="flex w-[438px] shrink-0 flex-col pt-[2px]">
        <PanelHeader title="Project Navigator - Data" />
        <div className="flex min-h-0 flex-1 flex-col border-b-2 border-r-2 border-[#9aa1ae] bg-[#eef1f8] pl-[3px] pr-[2px] pt-[2px]">
            <div className="flex min-h-0 flex-1 border-l border-t border-[#8d929c] bg-[#f0f0f0]">
                <ul className="min-w-0 flex-1 overflow-hidden bg-[#fcfcf4] pl-[2px] pt-px text-[14px]">
                    {treeRows.map(([guides, icon, text], i) => (
                        <li key={i} className="flex h-[22px] items-center whitespace-nowrap">
                            {guides.split('').map((g, j) => <Guide key={j} kind={g} />)}
                            <span className="mr-[3px] flex w-[19px] shrink-0 justify-center"><TreeIcon name={icon} /></span>
                            <span className={i === 1 ? 'font-bold' : i === 18 ? 'text-[#4a43f5]' : ''}>{text}</span>
                        </li>
                    ))}
                </ul>
                <div className="flex w-5 flex-col items-center">
                    <Chevron d="M1 7L5 3L9 7" cls="my-[6px] h-[10px] w-[10px]" />
                    <div className="h-[220px] w-[19px] bg-[#cdcdcd]" />
                    <Chevron d="M1 3L5 7L9 3" cls="mb-[6px] mt-auto h-[10px] w-[10px]" />
                </div>
            </div>
            <div className="flex h-[22px] shrink-0 items-center border-l border-[#8d929c] bg-[#f0f0f0] pr-[26px]">
                <Chevron d="M7 1L3 5L7 9" cls="mx-[5px] h-[10px] w-[10px]" />
                <div className="h-[19px] w-[195px] bg-[#cdcdcd]" />
                <Chevron d="M3 1L7 5L3 9" cls="ml-auto h-[10px] w-[10px]" />
            </div>
        </div>
        <div className="flex h-[29px] shrink-0 items-start pl-[5px] text-[13px] text-[#555a63]">
            <button type="button" className="flex h-[26px] items-center gap-[3px] rounded-b-sm border border-t-0 border-[#b9d9df] bg-[#f2f4f7] pr-[3px]">
                <svg viewBox="0 0 16 16" className="h-4 w-4"><path d="M3 1h13v9H3z" fill="#e8f0fb" stroke="#5b84c4" /><path d="M3 1h13v3H3z" fill="#5b84c4" /><path d="M0 5h7v8H0z" fill="#f0c22e" /><circle cx="9" cy="9" r="3.500" fill="#cfe4f7" stroke="#345d9c" strokeWidth="1.500" /><path d="M11.500 11.500L15 15" stroke="#8a4b2a" strokeWidth="2" /></svg>
                Data
            </button>
            <button type="button" className="ml-2 flex h-[26px] items-center gap-[2px]">
                <svg viewBox="0 0 16 16" className="h-4 w-4"><path d="M1 4h12v11H1z" fill="#eef4fc" stroke="#3c66b0" strokeWidth="1.500" /><path d="M3 8h8M3 10.500h8M3 13h8" stroke="#5580d0" /><path d="M2 4l6-3 8 1v3l-5 2-4 1-1-2z" fill="#8d6b55" stroke="#4a3426" strokeWidth=".7" /></svg>
                Display
            </button>
            <button type="button" className="ml-3 flex h-[26px] items-center gap-[2px]">
                <svg viewBox="0 0 16 16" className="h-4 w-4"><path d="M9 1l3 1-2 7-5 3-2-1z" fill="#7396e0" stroke="#2447a5" /><path d="M1 14h13l-2-3M11 6q4 3 1 8" fill="none" stroke="#2447a5" strokeWidth="1.700" /></svg>
                Views
            </button>
        </div>
    </aside>
);

const Group = ({ title, className, children }: { title: string; className?: string; children: React.ReactNode }) => (
    <fieldset className={`border-b border-r border-[#a9a9ea] bg-[#f0f4fa] [clip-path:polygon(0_0,calc(100%_-_12px)_0,100%_12px,100%_100%,0_100%)] ${className ?? ''}`}>
        <legend className="float-left h-[18px] w-full bg-[#dce6f4] pl-[3px] font-['Liberation_Sans',sans-serif] text-[14px] leading-[18px] text-[#24477b]">{title}</legend>
        <div className="clear-left">{children}</div>
    </fieldset>
);

const IconButton = ({ label, children }: { label: string; children: React.ReactNode }) => (
    <button type="button" aria-label={label} className="flex h-[26px] w-[30px] shrink-0 items-center justify-center border border-[#adadad] bg-[#e1e1e1]">{children}</button>
);

const NewIcon = () => (
    <svg viewBox="0 0 20 20" className="h-5 w-5"><path d="M5 8h14v11H5z" fill="#d5d5da" stroke="#555" /><path d="M5 8h14v3H5z" fill="#34508c" /><Star x={5} y={6} /></svg>
);

const Radio = ({ name, label, checked }: { name: string; label: string; checked?: boolean }) => (
    <label className="flex h-5 items-center gap-[3px]">
        <input type="radio" name={name} defaultChecked={checked} className="h-4 w-4 appearance-none rounded-full border border-[#333] bg-white checked:bg-[#333] checked:shadow-[inset_0_0_0_2px_white]" />
        {label}
    </label>
);

const AssignDialog = () => {
    const [values, setValues] = useState({ x: '0.00', y: '0.00', z: '0.00' });

    return (
        <section className="absolute left-[139px] top-[72px] w-[457px] border border-[#6b6b6b] bg-[#f0f0f0] font-['DejaVu_Sans_Condensed','Noto_Sans',sans-serif] text-[13px] shadow-[2px_4px_14px_rgba(0,0,0,0.35)]">
            <div className="flex h-8 items-center bg-white pl-[3px] pr-[15px]">
                <h2 className="flex-1 whitespace-nowrap font-['Open_Sans',sans-serif] text-[14px]">Assign Member Properties to Members Graphically</h2>
                <button type="button" aria-label="Close">
                    <svg viewBox="0 0 12 12" className="h-3 w-3"><path d="M0 0l12 12M12 0L0 12" stroke="#111" strokeWidth="1.200" /></svg>
                </button>
            </div>
            <div className="px-[9px] pb-[10px] pt-[9px]">
                <Group title="Cross-Section" className="h-[56px]">
                    <div className="flex items-center gap-[4px] pl-[3px] pt-[6px]">
                        <div className="flex h-[30px] w-[326px] items-center border border-[#707070] bg-white px-[2px]">
                            <span className="h-6 w-3 border border-[#555] bg-[#b87070]" />
                            <svg viewBox="0 0 16 16" className="h-4 w-4"><path d="M5 3h7M5 14h7M8.500 3v11" stroke="#3a4c80" strokeWidth="1.300" /></svg>
                            <select aria-label="Cross-Section" className="h-6 w-[270px] appearance-none border border-dotted border-[#e08a2e] bg-[#0078d7] pl-[5px] text-white">
                                <option>{'3\u00a0\u00a0\u00a0IPE 300\u00a0\u00a0\u00a0\u00a0Steel S 235'}</option>
                            </select>
                            <Chevron d="M0 3L5 8L10 3" cls="ml-auto mr-1 h-[10px] w-[10px]" thin />
                        </div>
                        <IconButton label="Library"><svg viewBox="0 0 20 20" className="h-5 w-5"><path d="M1 15l2-12q4-2 7 1q3-3 6-1l3 12q-5-2-9 1q-5-3-9-1z" fill="#f2ecdc" stroke="#555" /><path d="M1 15q5-2 9 1q5-3 9-1v2q-5-2-9 1q-5-3-9-1z" fill="#5a5f72" /><path d="M10 4v12" stroke="#555" /><path d="M6 3q3 0 4 2v10q-2-2-5-1z" fill="#9a9eac" /></svg></IconButton>
                        <IconButton label="New Cross-Section"><NewIcon /></IconButton>
                        <IconButton label="Info"><svg viewBox="0 0 20 20" className="h-5 w-5"><circle cx="10" cy="10" r="9" fill="#18264f" /><path d="M7.500 9h3.500v6M7 15.500h6.500" stroke="#fff" strokeWidth="2.200" /><circle cx="10" cy="5.500" r="1.600" fill="#fff" /></svg></IconButton>
                    </div>
                </Group>
                <Group title="Member Hinge" className="mt-3 h-[56px]">
                    <div className="flex items-center gap-[4px] pl-[3px] pt-[6px]">
                        <div className="flex h-[30px] w-[326px] items-center border border-[#707070] bg-white">
                            <select aria-label="Member Hinge" className="w-[299px] appearance-none pl-[2px]"><option>None</option></select>
                            <Chevron d="M0 3L5 8L10 3" cls="ml-auto mr-[6px] h-[10px] w-[10px]" thin />
                        </div>
                        <IconButton label="New Member Hinge"><NewIcon /></IconButton>
                    </div>
                </Group>
                <div className="mt-3 flex gap-[9px]">
                    <Group title="Member Eccentricity" className="h-[233px] flex-1">
                        <div className="flex flex-col pl-[3px] pt-[9px]">
                            <p className="leading-5">Reference system:</p>
                            <Radio name="system" label="Local x,y,z" checked />
                            <div className="h-[5px]" />
                            <Radio name="system" label="Global X,Y,Z" />
                            <p className="mt-6 leading-5">Eccentricity</p>
                            <div className="mt-[4px] flex flex-col gap-1">
                                {(['x', 'y', 'z'] as const).map((axis) => (
                                    <div key={axis} className="flex h-6 items-center">
                                        <label htmlFor={`ecc-${axis}`} className="w-[25px] pt-2 text-[11px] leading-4">e<span className="text-[10px]">{axis}</span>:</label>
                                        <div className="flex h-6 w-24 items-center gap-[1px] border border-[#7a9cc0] bg-white pr-[1px]">
                                            <input id={`ecc-${axis}`} value={values[axis]} onChange={(e) => setValues({ ...values, [axis]: e.target.value })} className="w-0 flex-1 pr-1 text-right outline-none" />
                                            <span className="flex h-5 w-4 flex-col justify-between">
                                                <button type="button" aria-label="Up" className="flex h-[10px] items-center justify-center border border-[#adadad] bg-[#ececec]"><svg viewBox="0 0 8 4" className="h-1 w-2"><path d="M4 0l4 4H0z" /></svg></button>
                                                <button type="button" aria-label="Down" className="flex h-[10px] items-center justify-center border border-[#adadad] bg-[#ececec]"><svg viewBox="0 0 8 4" className="h-1 w-2"><path d="M0 0h8L4 4z" /></svg></button>
                                            </span>
                                            <button type="button" aria-label="More" className="flex h-5 w-[11px] items-center justify-center border border-[#adadad] bg-[#ececec]"><svg viewBox="0 0 4 8" className="h-2 w-1"><path d="M0 0v8l4-4z" /></svg></button>
                                        </div>
                                        <span className="ml-[7px]">[in]</span>
                                    </div>
                                ))}
                            </div>
                        </div>
                    </Group>
                    <Group title="Status" className="h-[233px] w-[183px]">
                        <div className="flex flex-col gap-1 pl-[3px] pt-[10px]">
                            <Radio name="status" label="Set" checked />
                            <Radio name="status" label="Delete" />
                            <Radio name="status" label="Keep original" />
                        </div>
                    </Group>
                </div>
                <hr className="mt-[9px] border-[#a0a0a0]" />
                <div className="mt-[15px] flex">
                    <IconButton label="Help"><svg viewBox="0 0 20 20" className="h-5 w-5"><circle cx="10" cy="9" r="8.500" fill="#d5d8df" stroke="#85878e" /><path d="M3 19l2-5 4 2z" fill="#a9abb2" /><path d="M6.500 7q0-3 3.500-3t3.500 3q0 2-3.500 3.500v1.500M10 13.500v2" stroke="#2b4a92" strokeWidth="2" fill="none" /></svg></IconButton>
                    <span className="w-[10px]" />
                    <IconButton label="Units">
                        <svg viewBox="0 0 20 20" className="h-5 w-5"><path d="M0 0h20v6H0z" fill="#7fce72" /><path d="M3 6V3M6 6V3M9 6V3M12 6V3M15 6V3" stroke="#3f8a36" /><rect x="7" y="15" width="13" height="4" fill="#7c8cc0" /><text x="0" y="17" fontSize="11" fontFamily="Liberation Serif, serif" fill="#222">0.00</text></svg>
                    </IconButton>
                    <button type="button" className="ml-auto h-[26px] w-[86px] border-2 border-[#0078d7] bg-[#e1e1e1]">OK</button>
                    <button type="button" className="ml-[10px] h-[26px] w-[86px] border border-[#adadad] bg-[#e1e1e1]">Cancel</button>
                </div>
            </div>
        </section>
    );
};

const SelectionPopup = () => {
    const [selected, setSelected] = useState('2,3,5S,4E');

    return (
        <section className="absolute left-[698px] top-[23px] w-[298px] rounded-md border border-black bg-[#ffffe1] px-[13px] pb-[15px] pt-[13px] font-['Liberation_Sans',sans-serif] text-[13px] leading-[18px]">
            <div className="flex h-[67px]">
                <svg viewBox="0 0 50 44" className="h-[44px] w-[50px]">
                    <path d="M6 3l9 7M15 2l-9 9M10 1v10" stroke="#7a1a80" strokeWidth="2" />
                    <path d="M13 8v25l6-5 4 9 5-2-3-9 8-3z" fill="#fff" stroke="#000" strokeWidth="2.200" />
                </svg>
                <div>
                    <h2 className="text-[14px] font-bold leading-[18px]">Multiple Selection</h2>
                    <p>Select Side of Member</p>
                </div>
            </div>
            <label htmlFor="selected" className="block">Selected:</label>
            <input id="selected" value={selected} onChange={(e) => setSelected(e.target.value)} className="mt-[2px] block h-[18px] w-full border border-[#555] bg-white pl-px outline-none" />
            <hr className="mt-[8px] border-[#999]" />
            <div className="mt-[7px] flex gap-[11px]">
                <button type="button" className="mr-auto h-7 w-[59px] rounded border border-[#adadad]">Clear</button>
                <button type="button" className="h-7 w-[59px] rounded border border-[#adadad]">OK</button>
                <button type="button" className="h-7 w-[59px] rounded border border-[#adadad]">Cancel</button>
            </div>
        </section>
    );
};

const gridDots = Array.from({ length: 37 }, (_, c) =>
    Array.from({ length: 17 }, (_, r) => {
        const col = c - 30;
        const start = (((353 + col * 6.73) % 40) + 40) % 40;
        return [1494 + col * 35, Math.round(start + 120 + r * 40)];
    })
).flat();

const loads = [[1354, 384, 434], [1587, 371, 420], [1635, 438, 488], [1403, 460, 502]];
const loadLabels = [[1360, 389], [1592, 375], [1640, 443], [1408, 457]];
const handles = [[1401, 456], [1448, 465], [1556, 446], [1526, 460], [1540, 483], [1586, 491], [1463, 488], [1434, 501], [1494, 541], [1494, 608]];

const arms = [
    [1496, 473, 1354, 447],
    [1496, 474, 1587, 432],
    [1496, 474, 1635, 501],
    [1496, 473, 1403, 515],
];

const Triad = ({ x, y }: { x: number; y: number }) => (
    <g transform={`translate(${x} ${y})`} fontFamily="Liberation Sans, sans-serif" fontSize="10" strokeWidth="1.500">
        <path d="M0 0L27 5" stroke="#f00" /><path d="M26 1.500L35 6.500L25 8.500Z" fill="#c00000" />
        <path d="M0 0L-16 7" stroke="#0f0" /><path d="M-16 3.500L-23 9.500L-13 10Z" fill="#0a9a0a" />
        <path d="M0 0V29" stroke="#00f" /><path d="M-3 28H3L0 38Z" fill="#0000b0" />
        <text x="39" y="12" fill="#f00">X</text><text x="-30" y="16" fill="#0e0">Y</text><text x="-3" y="52" fill="#22f">Z</text>
    </g>
);

const Viewport = () => (
    <div className="relative min-h-0 flex-1 overflow-hidden border-2 border-b-white border-l-[#75787f] border-r-white border-t-[#75787f] bg-[#fcfcfc]">
        <svg className="absolute inset-0 h-full w-full">
            <g transform="translate(-444 -125)">
                <path d="M794.500 120V740M1144.500 120V740M727 125L1710 314" stroke="#cacaca" fill="none" />
                <path d="M444 471.500L1494 674L1710 715.500M1494.500 120V740" stroke="#2d8f8f" fill="none" />
                <path d={gridDots.map(([x, y]) => `M${x} ${y}h1v1h-1z`).join('')} fill="#111" />
                <ellipse cx="1495" cy="676" rx="13" ry="5" fill="#8ee88e" />
                <path d="M1486 474H1504V673H1486Z" fill="#6f9cf2" />
                <path d="M1486 474h5v199h-5z" fill="#a3c2fa" /><path d="M1491 474h8v199h-8z" fill="#7ba8f4" />
                {arms.map(([x1, y1, x2, y2], i) => (
                    <g key={i}>
                        <path d={`M${x1} ${y1}L${x2} ${y2}`} stroke="#8d7410" strokeWidth="9" />
                        <path d={`M${x1} ${y1}L${x2} ${y2}`} stroke="#f0cf2e" strokeWidth="7" />
                    </g>
                ))}
                <g fill="#0ff">{handles.map(([x, y]) => <rect key={`${x}-${y}`} x={x - 4} y={y - 4} width="8" height="8" />)}</g>
                <g stroke="#f00" strokeWidth="4">
                    <path d="M1354 447L1397 454.500M1402 456L1425 460M1496 474L1522 462M1529 459L1552 448.500M1559 445L1587 432M1496 474L1536 482M1541 483L1583 490.500M1588 492L1635 501M1449 495L1438 499.500M1431 503L1403 515" />
                </g>
                {loads.map(([x, y1, y2]) => (
                    <g key={x} fill="#000080"><rect x={x - 1} y={y1} width="2" height={y2 - y1 - 5} /><path d={`M${x - 4} ${y2 - 6}h8l-4 6.500z`} /></g>
                ))}
                <g fontFamily="Liberation Sans, sans-serif" fontSize="9" fontWeight="bold" fill="#000080">
                    {loadLabels.map(([x, y]) => <text key={x} x={x} y={y}>1.124</text>)}
                </g>
                <Triad x={1494} y={674} />
                <Triad x={499} y={634} />
            </g>
        </svg>
        <p className="absolute left-[4px] top-[5px] font-['Liberation_Sans',sans-serif] text-[11px] leading-[14px]">LC1<br />Loads [kip]</p>
        <AssignDialog />
        <SelectionPopup />
        <svg className="pointer-events-none absolute inset-0 h-full w-full drop-shadow-[5px_6px_3px_rgba(0,0,0,0.45)]">
            <g transform="translate(-445 -125)">
                <path d="M920 621L1138 284" stroke="#c00000" strokeWidth="5" />
                <path d="M1149 267L1124 280L1146 294Z" fill="#c00000" />
            </g>
        </svg>
    </div>
);

const columns = ['A', 'B', 'C', 'D', 'E', 'F', 'G', 'H', 'I', 'J', 'K', 'L', 'M', 'N', 'O'];
const members = [
    { no: 1, section: 1, length: '16.40', weight: '1290.19', axis: 'Z' },
    { no: 2, section: 2, length: '13.12', weight: '197.29', axis: 'X' },
    { no: 3, section: 2, length: '13.12', weight: '197.29', axis: 'Y' },
    { no: 4, section: 2, length: '13.12', weight: '197.29', axis: 'X' },
    { no: 5, section: 2, length: '13.12', weight: '197.29', axis: 'Y' },
];

const SectionCell = ({ no }: { no: number }) => (
    <td className="border border-[#a0a0a0] p-0">
        <div className="flex items-center">
            <span className={`ml-px h-4 w-4 border border-[#333] ${no === 1 ? 'bg-[#6699ff]' : 'bg-[#f5c400]'}`} />
            <svg viewBox="0 0 12 12" className="ml-px h-3 w-3">
                <path d={no === 1 ? 'M0 1.500h12M0 10.500h12' : 'M2 1.500h7M2 10.500h7'} stroke="#3a4c80" strokeWidth={no === 1 ? 2 : 1.300} />
                <path d={no === 1 ? 'M6 1v10' : 'M5.500 1v10'} stroke="#3a4c80" strokeWidth={no === 1 ? 2 : 1.300} />
            </svg>
            <span className="ml-[20px]">{no}</span>
        </div>
    </td>
);

const th = 'border-x border-[#a0a0a0] p-0 font-normal leading-[17px]';
const td = 'border border-[#a0a0a0] p-0 text-center';

const MemberTable = () => (
    <table className="w-full table-fixed border-collapse text-[13px] leading-[18px]">
        <colgroup>
            <col className="w-[53px]" /><col className="w-[57px]" /><col className="w-[136px]" />
            <col className="w-[79px]" /><col className="w-[79px]" /><col className="w-[79px]" /><col className="w-[93px]" />
            <col className="w-[50px]" /><col className="w-[50px]" /><col className="w-[57px]" /><col className="w-[50px]" />
            <col className="w-[86px]" /><col className="w-[86px]" /><col className="w-[86px]" /><col className="w-9" /><col />
        </colgroup>
        <thead>
            <tr className="h-[17px]">
                <th rowSpan={3} className="border border-[#808080] bg-[#e1e1e1] p-0 pt-1 font-normal leading-[16px]">Member<br />No.</th>
                {columns.map((c) => (
                    <th key={c} className={`border border-b-2 border-[#707070] p-0 font-normal leading-[14px] ${c === 'A' ? 'bg-[#0078d7] text-white' : 'bg-[#e1e1e1]'}`}>{c}</th>
                ))}
            </tr>
            <tr className="h-[17px] bg-[#f0f0f0]">
                <th className={th}>Line</th>
                <th className={th} />
                <th className={th} colSpan={2}>Cross-Section No.</th>
                <th className={th} colSpan={2}>Member Rotation</th>
                <th className={th} colSpan={2}>Hinge No.</th>
                <th className={th}>Eccentr.</th>
                <th className={th}>Division</th>
                <th className={th}>Taper</th>
                <th className={`${th} text-[#777]`}>Length</th>
                <th className={`${th} text-[#777]`}>Weight</th>
                <th className={th} />
                <th className={th} />
            </tr>
            <tr className="h-[21px] bg-[#f0f0f0]">
                {['No.', 'Member Type', 'Start', 'End', 'Type', 'β [°]', 'Start', 'End', 'No.', 'No.', 'Shape', 'L [ft]', 'W [lb]', '', 'Comment'].map((t, i) => (
                    <th key={i} className={`${th} ${i === 11 || i === 12 ? 'text-[#777]' : ''}`}>{t}</th>
                ))}
            </tr>
        </thead>
        <tbody>
            {members.map((m) => {
                const gray = m.no === 2 ? 'bg-[#dcdcdc] text-[#777]' : 'bg-[#f0f0f0] text-[#777]';
                return (
                    <tr key={m.no} className={m.no === 2 ? 'h-[19px] bg-[#ebebeb]' : 'h-[19px] bg-white'}>
                        <th className={`border border-[#808080] p-0 font-normal ${m.no === 1 ? 'bg-[#0078d7] text-white' : 'bg-[#e1e1e1]'}`}>{m.no}</th>
                        <td className={m.no === 1 ? 'border border-dotted border-black p-0 text-center' : td}>{m.no}</td>
                        <td className="border border-[#a0a0a0] p-0">
                            <div className="flex items-center gap-1"><span className="ml-px h-4 w-4 border border-[#333] bg-[#6699ff]" />Beam</div>
                        </td>
                        <SectionCell no={m.section} />
                        <SectionCell no={m.section} />
                        <td className="border border-[#a0a0a0] p-0 pl-1"><u>A</u>ngle</td>
                        <td className="border border-[#a0a0a0] p-0 pr-1 text-right">0.00</td>
                        <td className={td}>0</td>
                        <td className={td}>0</td>
                        <td className={td}>0</td>
                        <td className={td}>0</td>
                        <td className={`${td} ${gray}`} />
                        <td className={`border border-[#a0a0a0] p-0 pr-1 text-right ${gray}`}>{m.length}</td>
                        <td className={`border border-[#a0a0a0] p-0 pr-1 text-right ${gray}`}>{m.weight}</td>
                        <td className={`${td} ${gray}`}>{m.axis}</td>
                        <td className={td} />
                    </tr>
                );
            })}
        </tbody>
    </table>
);

const tableTabs = ['Line Supports', 'Surface Supports', 'Line Hinges', 'Cross-Sections', 'Member Hinges', 'Member Eccentricities', 'Member Divisions', 'Members', 'Member Elastic Foundations', 'Member Nonlinearities'];

const TablePanel = () => (
    <section className="mt-[6px] shrink-0 bg-[#f0f0f0]">
        <PanelHeader title="1.17 Members" />
        <div className="flex h-8 items-center overflow-hidden bg-linear-to-b from-[#e9edf7] to-[#d1d5de] pl-[9px]">
            <ToolItems items="tEdit* tAdd tDown tRes tWave | tPrev tNext | tGo1* tGo2* tSync | tCell1 tCell2 tCell3 | tCell4 | tDel tIns tOut | tCol tRows | tYellow | tProps glasses excel calc | tAb fx fxDel" />
        </div>
        <div className="font-['Liberation_Sans',sans-serif]">
            <div className="flex h-[163px] border-y-2 border-l border-[#6f6f6f] pl-[2px] pr-[2px] pt-px">
                <div className="min-w-0 flex-1"><MemberTable /></div>
                <div className="ml-px flex w-5 flex-col items-center pb-2">
                    <Chevron d="M1 7L5 3L9 7" cls="my-[5px] h-[10px] w-[10px]" />
                    <div className="h-[110px] w-[19px] bg-[#cdcdcd]" />
                    <Chevron d="M1 3L5 7L9 3" cls="mt-[6px] h-[10px] w-[10px]" />
                </div>
            </div>
            <div className="flex h-[18px] text-[13px] leading-[17px]">
                {tableTabs.map((t) => (
                    <button
                        key={t}
                        type="button"
                        className={`shrink-0 whitespace-nowrap rounded-b border-b border-r border-[#555] px-[6px] ${t === 'Members' ? 'bg-[#fafafa]' : 'bg-[#e3e3e3]'}`}
                    >
                        {t}
                    </button>
                ))}
                <div className="ml-auto flex">
                    {['M1 1v8M8 1v8L3 5z', 'M7 1v8L3 5z', 'M3 1v8l4-4z', 'M9 1v8M2 1v8l5-4z'].map((d, i) => (
                        <button key={i} type="button" aria-label="Scroll tabs" className="flex w-[18px] items-center justify-center border-b border-r border-[#888] bg-[#f0f0f0]">
                            <svg viewBox="0 0 10 10" className="h-[10px] w-[10px]"><path d={d} stroke="#000" strokeWidth="1.200" /></svg>
                        </button>
                    ))}
                </div>
            </div>
            <div className="h-[22px] border-t border-white" />
        </div>
    </section>
);

const LegendPanel = () => (
    <aside className="flex w-[206px] shrink-0 flex-col pt-[2px]">
        <PanelHeader title="Panel" />
        <div className="flex min-h-0 flex-1 flex-col border-b-2 border-[#9aa1ae] bg-[#f0f0f0] px-[7px] pt-[11px]">
            <p className="font-['Liberation_Sans',sans-serif] text-[11px] leading-[14px]">Cross-Sections</p>
            <ul className="mt-1 min-h-0 flex-1 overflow-hidden border-l border-t border-[#8d929c] bg-white pl-[5px] pt-px font-['DejaVu_Sans_Condensed','Noto_Sans',sans-serif] text-[13px]">
                <li className="flex h-[25px] items-center gap-[5px] whitespace-nowrap"><span className="mb-1 h-[19px] w-5 shrink-0 border border-[#d0d0d0] bg-[#6699ff]" />1: HEB 300; Steel S 235</li>
                <li className="flex h-[25px] items-center gap-[5px] whitespace-nowrap"><span className="mb-1 h-[19px] w-5 shrink-0 border border-[#d0d0d0] bg-[#f5c400]" />2: IPE 200 | DIN 1025-5:1994; Steel S 235</li>
            </ul>
            <button type="button" aria-label="Panel options" className="mb-[7px] mt-px flex h-[28px] w-[28px] items-center justify-center border border-[#adadad] bg-[#e1e1e1]">
                <svg viewBox="0 0 20 20" className="h-5 w-5"><path d="M2 3h11v13H2z" fill="#f2f2f2" stroke="#333" /><path d="M2 4h11" stroke="#333" strokeWidth="2" /><path d="M4 8h4M4 11h4M4 14h4" stroke="#666" /><path d="M10 7h8v11h-8z" fill="#dfe3ea" stroke="#333" /><path d="M12 11h4M12 14h4" stroke="#555" strokeWidth="1.500" /></svg>
            </button>
        </div>
        <div className="h-[29px] shrink-0 pl-[3px]">
            <button type="button" aria-label="Colors" className="flex h-[26px] w-[21px] items-center justify-center bg-[#f2f4f7]">
                <svg viewBox="0 0 16 14" className="h-[14px] w-4"><path d="M1 2h14" stroke="#d33" strokeWidth="3.500" /><path d="M1 7h14" stroke="#2a9a3a" strokeWidth="3.500" /><path d="M1 12h14" stroke="#2433c4" strokeWidth="3.500" /></svg>
            </button>
        </div>
    </aside>
);

export default function App() {
    return (
        <div className="flex h-screen flex-col overflow-hidden bg-[#cfd3dc] font-['Open_Sans','Noto_Sans',sans-serif] text-black">
            <header className="flex h-[29px] shrink-0 items-center bg-white pl-[3px] text-[#8b8b8b]">
                <svg viewBox="0 0 20 20" className="h-5 w-5">
                    <path d="M5 5l6-4 8 3v8l-6 5-7-2z" fill="#49719f" stroke="#203c5c" /><path d="M9 3l7 3v9M12 2l6 3" stroke="#9bbbdc" fill="none" />
                    <path d="M8 8H3v5q5-1 5 2t-6 3" fill="none" stroke="#c99a1c" strokeWidth="2.600" />
                </svg>
                <h1 className="ml-1 flex-1 text-[14px]">RFEM 5.22.03 x64 Student - [004664_200826_Stabeigenschaften, LC1*]</h1>
                <div className="flex items-center gap-[46px] pr-[26px]">
                    <button type="button" aria-label="Minimize"><svg viewBox="0 0 12 12" className="h-3 w-3"><path d="M0 6.500h12" stroke="#888" /></svg></button>
                    <button type="button" aria-label="Restore"><svg viewBox="0 0 12 12" className="h-3 w-3"><path d="M.500 2.500h9v9h-9zM2.500 2.500v-2h9v9h-2" fill="none" stroke="#888" /></svg></button>
                    <button type="button" aria-label="Close"><svg viewBox="0 0 12 12" className="h-3 w-3"><path d="M0 0l12 12M12 0L0 12" stroke="#888" /></svg></button>
                </div>
            </header>

            <nav className="flex h-[30px] shrink-0 items-center pl-[4px] text-[13px] text-[#484e5c]">
                <span className="mr-1 h-4 border-l-2 border-dotted border-[#9398a4]" />
                <Logo className="h-4 w-5 shrink-0" />
                <div className="ml-[11px] flex gap-[15px]">
                    {menus.map(([pre, key, rest]) => <button key={key + rest} type="button" className="whitespace-nowrap">{pre}<u>{key}</u>{rest}</button>)}
                </div>
                <div className="ml-auto flex items-center gap-[13px] pr-2 pt-1">
                    <svg viewBox="0 0 8 8" className="h-2 w-2"><path d="M1 7h7" stroke="#555" strokeWidth="1.600" /></svg>
                    <svg viewBox="0 0 9 8" className="h-2 w-[9px]"><path d="M.500 3h6v4.500h-6zM2.500 2.500v-2h6v5h-2" fill="none" stroke="#555" strokeWidth="1.200" /></svg>
                    <svg viewBox="0 0 8 8" className="h-2 w-2"><path d="M0 0l8 8M8 0L0 8" stroke="#555" strokeWidth="1.800" /></svg>
                </div>
            </nav>

            <div className="flex h-8 shrink-0">
                <ToolGroup items="new open box boxBlue save report print preview | undo redo | selPoly selEllipse selRing selPlus selWin | table1* table2* | loadNew">
                    <div className="mx-[2px] flex h-[22px] w-[216px] border border-white bg-white">
                        <select aria-label="Load case" className="min-w-0 flex-1 appearance-none pl-[2px] text-[14px]"><option>LC1</option></select>
                        <span className="flex w-[18px] items-center justify-center bg-[#dfe2ea]"><svg viewBox="0 0 8 5" className="h-[5px] w-2"><path d="M0 0h8L4 5z" fill="#6b6f78" /></svg></span>
                    </div>
                    <ToolItems items="prev next showLoad* showVal* eyeRes valRes | glasses abacusWin abacus" />
                </ToolGroup>
                <ToolGroup items="gridHand gridSnap plane1 plane2 plane3* gridLines coord | moveCopy rotate mirror explode infoWin gearWin gears" />
                <ToolGroup items="cadDown cadUp cadRed cadRedUp" />
            </div>
            <div className="flex h-[31px] shrink-0">
                <ToolGroup items="nNode> nLine nMember> nPoly> | nSupport nLineSup nSurfSup | nDim> nText nGuides | nSurface> nOpening> nCurved> nSolid nExtrude> | nRelease> nLoadNode nLoad1 nLoad2 nLoad3 nLoad4>" />
                <ToolGroup items="hand zoomWin zoomX cube cubes | axX axY axZ axNX> crane> | render>" />
                <ToolGroup items="deform tool | secRes surfRes solidRes supRes cutRes pick> secWave multi | panel* clip> colors>" />
            </div>

            <main className="flex min-h-0 flex-1">
                <Navigator />
                <div className="mx-[5px] flex min-w-0 flex-1 flex-col pt-px">
                    <Viewport />
                    <TablePanel />
                </div>
                <LegendPanel />
            </main>

            <footer className="flex h-[27px] shrink-0 items-end border-t border-[#9fa4ae] bg-linear-to-b from-[#d3d6dd] via-[#a9aeb8] to-[#bbc0c9] text-[13px] text-[#2f3339]">
                <div className="flex-1" />
                <div className="flex h-[25px] gap-[2px] leading-[18px]">
                    {[['SNAP', 'w-[42px] pl-[2px]'], ['GRID', 'w-10 pl-[2px]'], ['CARTES', 'w-16 pl-[6px]'], ['OSNAP', 'w-[53px] pl-[2px]'], ['GLINES', 'w-[53px] pl-[2px]'], ['DXF', 'w-[33px] pl-[2px]']].map(([t, w]) => (
                        <button key={t} type="button" className={`whitespace-nowrap border-l border-r border-t border-black border-r-white pb-[6px] text-left ${w}`}>{t}</button>
                    ))}
                </div>
                <div className="ml-[2px] h-6 w-[188px] border-l border-[#8f949e]" />
                <div className="h-6 w-[88px] border-l border-[#8f949e]" />
                <div className="h-6 w-[72px] border-l border-[#8f949e]" />
                <div className="h-6 w-[72px] border-l border-[#8f949e]" />
                <div className="h-6 w-[77px] border-l border-[#8f949e]" />
            </footer>
        </div>
    );
}
